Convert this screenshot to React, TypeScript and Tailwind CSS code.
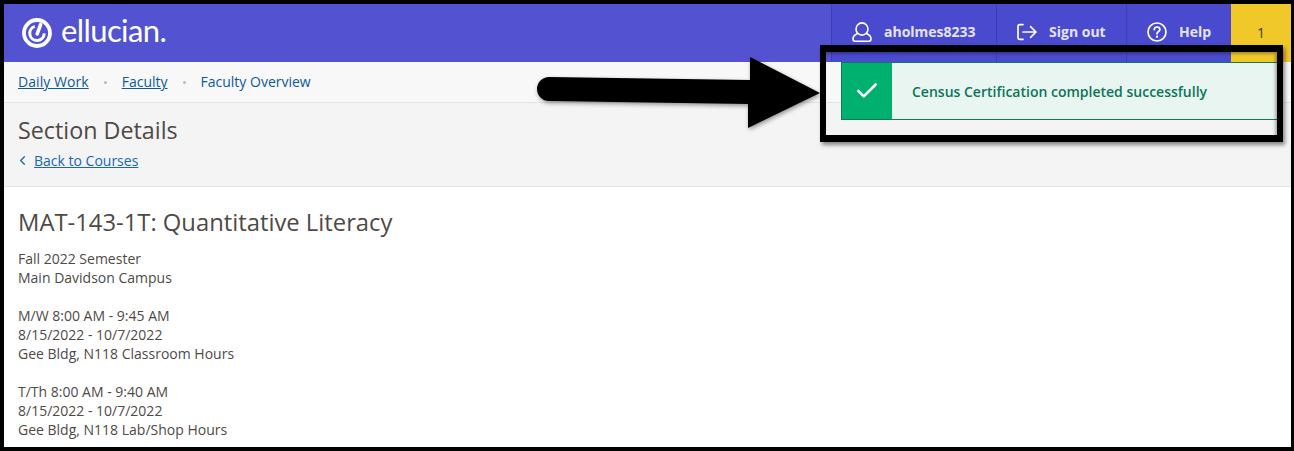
import React from "react";
import { Check, ChevronLeft } from "lucide-react";

const EllucianLogo = () => (
  <svg width="30" height="30" viewBox="0 0 30 30" fill="none">
    <circle cx="15" cy="15" r="13" stroke="white" strokeWidth="3.8" />
    <path d="M12.8 8.4 A7.2 7.2 0 1 0 22.2 15.4" stroke="white" strokeWidth="3" fill="none" />
    <path d="M18.6 6.6 L15.2 15.8" stroke="white" strokeWidth="3.6" strokeLinecap="round" />
  </svg>
);

const UserIcon = () => (
  <svg className="mr-[12px]" width="20" height="20" viewBox="0 0 20 20" fill="none" stroke="white" strokeWidth="1.6">
    <ellipse cx="10" cy="7" rx="6" ry="6.1" />
    <path d="M5.6 11.6 C2.8 12.8 1 14.8 1 17 C1 18.4 1.9 19.2 3 19.2 H17 C18.1 19.2 19 18.4 19 17 C19 14.8 17.2 12.8 14.4 11.6" />
  </svg>
);

const SignOutIcon = () => (
  <svg className="mr-[12px]" width="20" height="20" viewBox="0 0 20 20" fill="none" stroke="white" strokeWidth="1.7" strokeLinecap="round" strokeLinejoin="round">
    <path d="M6 2.6 H2.6 C1.6 2.6 1 3.2 1 4.2 V15.8 C1 16.8 1.6 17.4 2.6 17.4 H6" />
    <path d="M6 10 H19 M13.6 4.6 L19 10 L13.6 15.4" />
  </svg>
);

const HelpIcon = () => (
  <svg className="mr-[12px]" width="20" height="20" viewBox="0 0 20 20" fill="none" stroke="white" strokeWidth="1.7" strokeLinecap="round">
    <circle cx="10" cy="10" r="9" />
    <path d="M7.2 7.6 C7.4 5.9 8.6 5 10.1 5 C11.8 5 12.9 6.1 12.9 7.5 C12.9 9.5 10 9.6 10 11.8" />
    <path d="M10 14.6 V14.8" strokeWidth="2.2" />
  </svg>
);

const HeaderItem = ({ icon, label, className }: { icon: React.ReactNode; label: string; className: string }) => (
  <div className={`flex items-center border-l border-[#3d3dbb] pb-[2px] pl-[20px] ${className}`}>
    {icon}
    <span className="text-sm font-bold text-[#e4e4f8]">{label}</span>
  </div>
);

const ScheduleBlock = ({ lines }: { lines: string[] }) => (
  <p className="mb-[19px]">
    {lines.map((line) => (
      <span key={line} className="block">
        {line}
      </span>
    ))}
  </p>
);

export default function App() {
  return (
    <div className="relative h-[451px] w-[1294px] overflow-hidden border-y-4 border-r-[3px] border-l-4 border-black bg-white font-['Open_Sans',sans-serif] text-[#4f4a47]">
      {/* Top bar */}
      <header className="flex h-[58px] items-stretch justify-between bg-[#5353d1]">
        <div className="flex items-center pl-[18px]">
          <EllucianLogo />
          <span className="ml-[9px] pb-[5px] font-['Lato',sans-serif] text-[31px] leading-none tracking-[-0.6px] text-white">
            ellucian.
          </span>
        </div>
        <div className="flex items-stretch bg-[#4a4acf]">
          <HeaderItem className="w-[165px]" label="aholmes8233" icon={<UserIcon />} />
          <HeaderItem className="w-[130px]" label="Sign out" icon={<SignOutIcon />} />
          <HeaderItem className="w-[105px]" label="Help" icon={<HelpIcon />} />
          <div className="flex w-[60px] items-center justify-center bg-[#f0c829] text-sm text-[#3a3a2a]">1</div>
        </div>
      </header>

      {/* Breadcrumbs */}
      <nav className="flex h-[41px] items-center border-b border-[#e3e3e3] bg-[#f8f8f8] pl-[14px] text-sm text-[#0b5a9c]">
        <a className="underline tracking-[0.06px]">Daily Work</a>
        <span className="mx-[15px] h-[3px] w-[3px] rounded-full bg-[#bbbbbb]" />
        <a className="underline">Faculty</a>
        <span className="mx-[15px] h-[3px] w-[3px] rounded-full bg-[#bbbbbb]" />
        <span>Faculty Overview</span>
      </nav>

      {/* Page title */}
      <section className="h-[84px] border-b border-[#e3e3e3] bg-[#f4f4f4] pl-[14px] pt-[11px]">
        <h1 className="text-[23.3px] leading-[32px] text-[#4f4a47]">Section Details</h1>
        <a className="mt-[5px] flex items-center text-sm leading-[19px] text-[#1668b8]">
          <ChevronLeft className="ml-[-3px] mr-[2px] h-[15px] w-[15px]" strokeWidth={2} />
          <span className="ml-[2px] underline">Back to Courses</span>
        </a>
      </section>

      {/* Details */}
      <main className="pl-[14px] pt-[19px] text-sm leading-[19px]">
        <h2 className="mb-[11px] text-[23.8px] leading-[32px] text-[#4f4a47]">MAT-143-1T: Quantitative Literacy</h2>
        <ScheduleBlock lines={["Fall 2022 Semester", "Main Davidson Campus"]} />
        <ScheduleBlock lines={["M/W 8:00 AM - 9:45 AM", "8/15/2022 - 10/7/2022", "Gee Bldg, N118 Classroom Hours"]} />
        <ScheduleBlock lines={["T/Th 8:00 AM - 9:40 AM", "8/15/2022 - 10/7/2022", "Gee Bldg, N118 Lab/Shop Hours"]} />
      </main>

      {/* Screenshot annotation: box round the toast */}
      <div className="absolute left-[816px] top-[41px] h-[97px] w-[463px] overflow-hidden border-x-[6px] border-y-[7px] border-black shadow-[2px_3px_4px_rgba(0,0,0,0.45)]">
        <div className="absolute left-[15px] top-[10px] flex h-[58px] w-[450px] border border-[#0b7d5b] bg-[#e9f5f1]">
          <div className="flex w-[50px] items-center justify-center bg-[#00b06e]">
            <Check className="h-[26px] w-[26px] text-white" strokeWidth={2.4} />
          </div>
          <span className="ml-[20px] flex items-center text-[14px] font-semibold text-[#0b7558]">
            Census Certification completed successfully
          </span>
        </div>
        <div className="absolute inset-0 shadow-[inset_-2px_2px_3px_rgba(0,0,0,0.3)]" />
      </div>

      {/* Screenshot annotation: arrow */}
      <svg className="absolute left-[530px] top-[50px] drop-shadow-[1px_2px_2px_rgba(0,0,0,0.4)]" width="290" height="80" viewBox="0 0 290 80" fill="black">
        <path d="M15 23 L216 26 L216 3 L286 39 L214 74 L214 50 L15 47 A12 12 0 0 1 15 23 Z" />
      </svg>
    </div>
  );
}
